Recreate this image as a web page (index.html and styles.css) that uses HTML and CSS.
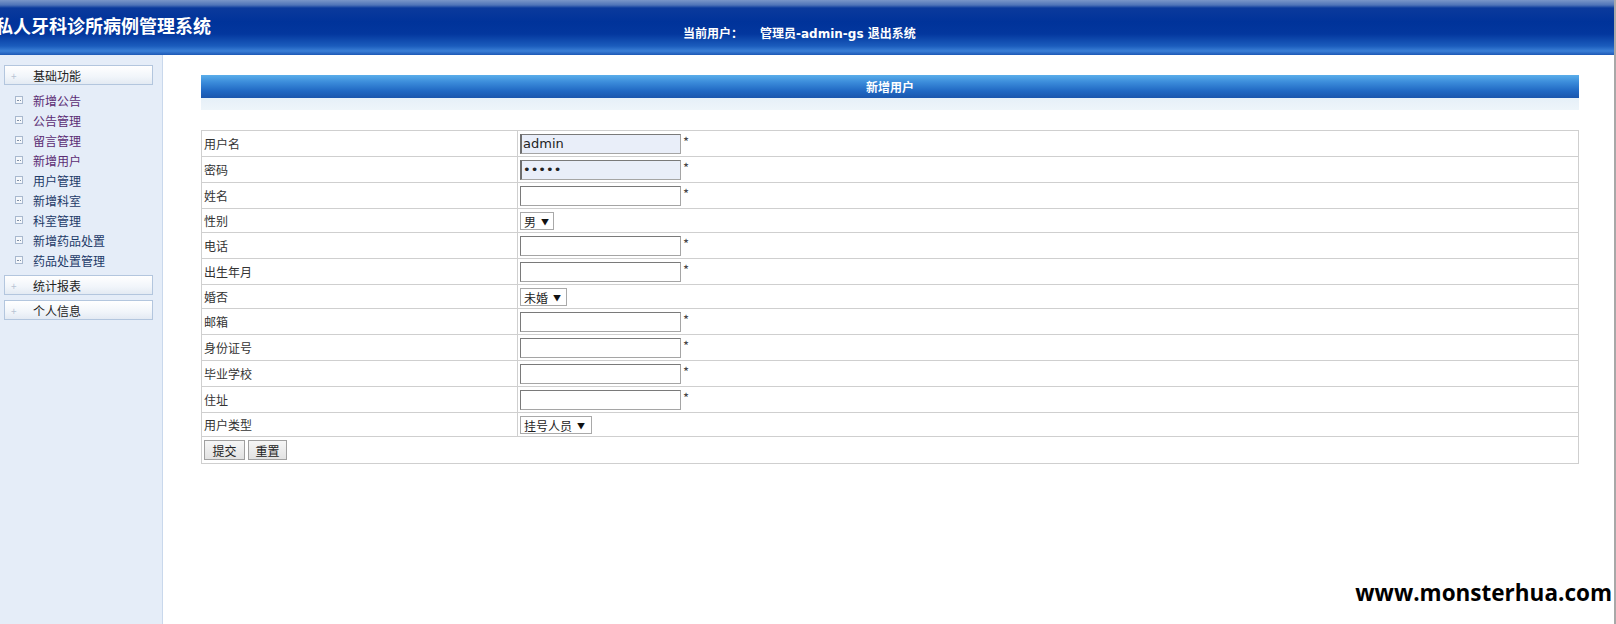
FILE: index.html
```html
<!DOCTYPE html>
<html lang="zh-CN">
<head>
<meta charset="utf-8">
<title>私人牙科诊所病例管理系统</title>
<link rel="stylesheet" href="styles.css">
</head>
<body>
<div class="page">
  <header class="top">
    <div class="brand-wrap"><h1 class="brand">私人牙科诊所病例管理系统</h1></div>
    <div class="user"><span class="lbl">当前用户：</span><span class="who">管理员-admin-gs</span> <a class="logout">退出系统</a></div>
  </header>
  <div class="body">
    <aside class="side">
      <div class="grp"><span class="plus">+</span>基础功能</div>
      <ul class="items">
        <li class="visited"><i class="ico"></i>新增公告</li>
        <li class="visited"><i class="ico"></i>公告管理</li>
        <li class="visited"><i class="ico"></i>留言管理</li>
        <li class="visited"><i class="ico"></i>新增用户</li>
        <li><i class="ico"></i>用户管理</li>
        <li><i class="ico"></i>新增科室</li>
        <li><i class="ico"></i>科室管理</li>
        <li><i class="ico"></i>新增药品处置</li>
        <li><i class="ico"></i>药品处置管理</li>
      </ul>
      <div class="grp"><span class="plus">+</span>统计报表</div>
      <div class="grp"><span class="plus">+</span>个人信息</div>
    </aside>
    <main class="main">
      <div class="bar">新增用户</div>
      <div class="strip"></div>
      <table class="form">
        <tr class="r-in"><td class="lab">用户名</td><td><span class="inp fill">admin</span><span class="req">*</span></td></tr>
        <tr class="r-in"><td class="lab">密码</td><td><span class="inp fill pw">•••••</span><span class="req">*</span></td></tr>
        <tr class="r-in"><td class="lab">姓名</td><td><span class="inp"></span><span class="req">*</span></td></tr>
        <tr class="r-sel"><td class="lab">性别</td><td><span class="sel w-sex">男<b class="arr">▼</b></span></td></tr>
        <tr class="r-in"><td class="lab">电话</td><td><span class="inp"></span><span class="req">*</span></td></tr>
        <tr class="r-in"><td class="lab">出生年月</td><td><span class="inp"></span><span class="req">*</span></td></tr>
        <tr class="r-sel"><td class="lab">婚否</td><td><span class="sel w-mar">未婚<b class="arr">▼</b></span></td></tr>
        <tr class="r-in"><td class="lab">邮箱</td><td><span class="inp"></span><span class="req">*</span></td></tr>
        <tr class="r-in"><td class="lab">身份证号</td><td><span class="inp"></span><span class="req">*</span></td></tr>
        <tr class="r-in"><td class="lab">毕业学校</td><td><span class="inp"></span><span class="req">*</span></td></tr>
        <tr class="r-in"><td class="lab">住址</td><td><span class="inp"></span><span class="req">*</span></td></tr>
        <tr class="r-sel"><td class="lab">用户类型</td><td><span class="sel w-type">挂号人员<b class="arr">▼</b></span></td></tr>
        <tr class="r-btn"><td colspan="2"><span class="btn">提交</span><span class="btn">重置</span></td></tr>
      </table>
    </main>
  </div>
  <div class="wm">www.monsterhua.com</div>
</div>
</body>
</html>
```
FILE: styles.css
```css
* { box-sizing: border-box; }
html, body { margin: 0; padding: 0; }
body {
  width: 1616px;
  height: 624px;
  overflow: hidden;
  background: #fff;
  font-family: "Noto Sans CJK SC", "DejaVu Sans", sans-serif;
  font-size: 12px;
  color: #333;
}
.page {
  position: relative;
  width: 1616px;
  height: 624px;
  border-right: 2px solid #a8a8a8;
  display: flex;
  flex-direction: column;
}
.top {
  height: 55px;
  flex: none;
  display: flex;
  background: linear-gradient(to bottom, #7a96c8 0px, #4f74b8 5px, #0b3a9c 8px, #00339a 22px, #03379e 34px, #1b5cbc 46px, #3a7fd6 51px, #2c6cc6 53px, #1d59b5 55px);
  overflow: hidden;
}
.brand-wrap { width: 683px; flex: none; padding-top: 13px; }
.brand {
  margin: 0 0 0 -5px;
  font-size: 18px;
  line-height: 24px;
  font-weight: bold;
  color: #fff;
  white-space: nowrap;
}
.user {
  padding-top: 25px;
  color: #fff;
  font-weight: bold;
  font-size: 12px;
  line-height: 16px;
  white-space: nowrap;
  font-family: "DejaVu Sans", "Noto Sans CJK SC", sans-serif;
}
.user .lbl { font-family: "Noto Sans CJK SC", sans-serif; margin-right: 17px; }
.user .logout { color: #fff; font-family: "Noto Sans CJK SC", sans-serif; }
.body { flex: 1; display: flex; }
.side {
  width: 163px;
  flex: none;
  background: #e5edf8;
  border-right: 1px solid #c9d8ec;
  padding: 10px 0 0 4px;
}
.grp {
  width: 149px;
  height: 20px;
  border: 1px solid #b3c6de;
  background: linear-gradient(to bottom, #ffffff 0%, #f1f5fa 60%, #e3eaf3 100%);
  display: flex;
  align-items: center;
  color: #222;
  font-size: 12px;
  margin-bottom: 5px;
}
.plus {
  width: 28px;
  padding-left: 6px;
  color: #b8c4d4;
  font-size: 10px;
}
.items { list-style: none; margin: 0 0 5px 0; padding: 0; }
.items li {
  height: 20px;
  display: flex;
  align-items: center;
  padding-left: 11px;
  color: #1d3a68;
  font-size: 12px;
}
.items li.visited { color: #5b2c74; }
.ico {
  width: 8px;
  height: 8px;
  border: 1px solid #a9b9cf;
  background: #f4f7fb;
  margin-right: 10px;
  position: relative;
}
.ico::after {
  content: "";
  position: absolute;
  left: 1px;
  right: 1px;
  top: 3px;
  border-top: 1px dotted #7f8fa6;
}
.main {
  flex: 1;
  padding: 20px 35px 0 38px;
}
.bar {
  height: 23px;
  background: linear-gradient(to bottom, #5aaeea 0%, #3c8ddb 30%, #2068c3 70%, #1a56ad 100%);
  color: #fff;
  font-weight: bold;
  font-size: 12px;
  text-align: center;
  line-height: 23px;
}
.strip {
  height: 12px;
  background: linear-gradient(to bottom, #e6f0f8, #eef5fa);
  margin-bottom: 20px;
}
.form {
  width: 100%;
  border-collapse: collapse;
  border: 1px solid #cfcfcf;
}
.form td {
  border: 1px solid #cfcfcf;
  padding: 0 2px;
  vertical-align: middle;
  font-size: 12px;
  color: #333;
}
.form td.lab { width: 316px; padding-left: 2px; }
.r-in td { height: 26px; }
.r-sel td { height: 24px; }
.r-btn td { height: 27px; padding-left: 2px; }
.inp {
  display: inline-block;
  vertical-align: middle;
  width: 161px;
  height: 20px;
  border: 1px solid #a5a5a5;
  border-top-color: #7a7a7a;
  border-left-color: #7a7a7a;
  background: #fff;
  font-family: "DejaVu Sans", sans-serif;
  font-size: 13px;
  line-height: 18px;
  padding-left: 1px;
  color: #222;
}
.inp.fill { background: #e9eef9; border-left: 2px solid #6e6e6e; }
.inp.pw { font-size: 13px; letter-spacing: 0; line-height: 18px; }
.req { color: #444; font-size: 13px; vertical-align: middle; margin-left: 2px; position: relative; top: -2px; }
.sel {
  display: inline-flex;
  align-items: center;
  height: 18px;
  border: 1px solid #a9a9a9;
  background: #fff;
  padding-left: 3px;
  font-size: 12px;
  color: #222;
  vertical-align: middle;
}
.w-sex { width: 34px; }
.w-mar { width: 47px; }
.w-type { width: 72px; }
.arr { font-weight: normal; font-size: 8px; margin-left: 5px; color: #111; }
.btn {
  display: inline-flex;
  align-items: center;
  justify-content: center;
  height: 20px;
  padding: 0 6px;
  border: 1px solid #a0a0a0;
  background: linear-gradient(to bottom, #f6f6f6, #e2e2e2);
  font-size: 12px;
  color: #222;
  margin-right: 3px;
  vertical-align: middle;
}
.btn:first-child { width: 41px; }
.btn + .btn { width: 39px; }
.wm {
  position: absolute;
  right: 2px;
  top: 579px;
  font-family: "Open Sans", "DejaVu Sans", sans-serif;
  font-weight: bold;
  font-size: 22.5px;
  line-height: 28px;
  color: #000;
  background: #fff;
  padding-left: 4px;
}
```
